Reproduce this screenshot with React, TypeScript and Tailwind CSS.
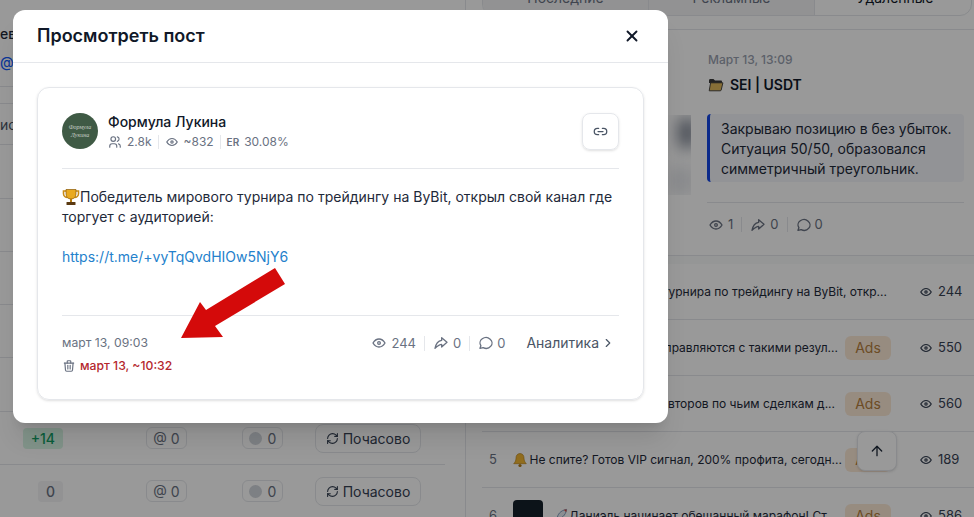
import { ArrowUp, ChevronRight, Link2, RefreshCw, X } from 'lucide-react';
import { TbEye, TbMessageCircle, TbShare3, TbTrash, TbUsers } from 'react-icons/tb';

const font = 'font-["Inter","Liberation_Sans",sans-serif]';

function Trophy() {
  return (
    <svg viewBox="0 0 18 18" className="inline-block h-[18px] w-[18px] align-[-4px]">
      <path d="M4 3H1.5v2.5C1.5 8 3.5 9.5 5.5 9.5M14 3h2.5v2.5c0 2.500-2 4-4 4" fill="none" stroke="#c98a12" strokeWidth="1.6" />
      <path d="M4 1.500h10V6c0 3-2 5-5 5S4 9 4 6z" fill="#e9a91e" stroke="#8a5a08" strokeWidth=".7" />
      <rect x="8" y="11" width="2" height="3" fill="#b67c10" />
      <rect x="4.500" y="14" width="9" height="3" rx=".5" fill="#5b3a12" />
    </svg>
  );
}

function Folder() {
  return (
    <svg viewBox="0 0 16 14" className="h-[14px] w-4 shrink-0">
      <path d="M1 2.500C1 1.700 1.500 1 2.300 1h3.200l1.500 1.600h6c.8 0 1 .6 1 1.400v1H1z" fill="#3a3a3a" />
      <path d="M2.600 4.800h12.300l-1.700 7.200c-.1.500-.5.8-1 .8H1.200z" fill="#e2b95c" stroke="#3a3a3a" strokeWidth=".9" />
    </svg>
  );
}

function Bell() {
  return (
    <svg viewBox="0 0 16 16" className="h-4 w-4 shrink-0">
      <path d="M8 1.500c-2.800 0-4 2.200-4 4.700 0 2.800-1.300 4.300-2.300 5.500h12.600c-1-1.200-2.300-2.700-2.300-5.500 0-2.500-1.200-4.700-4-4.700z" fill="#f2b632" stroke="#b07a14" strokeWidth=".6" />
      <circle cx="8" cy="13.500" r="1.600" fill="#b07a14" />
    </svg>
  );
}

function Rocket() {
  return (
    <svg viewBox="0 0 16 16" className="h-[15px] w-[15px] shrink-0">
      <path d="M4.500 11.500C4.500 7 8 2.500 14.500 1.500 13.500 8 9 11.500 4.500 11.500z" fill="#e8edf3" stroke="#5c7da8" strokeWidth=".8" />
      <path d="M11.500 1.900l2.600 2.600.4-3z" fill="#e0483e" />
      <path d="M4.500 11.500l-3 3 1-3.500zM5 12l-1 3 3-1.500z" fill="#f0a030" />
    </svg>
  );
}

function Divider() {
  return <span className="h-[15px] w-px bg-gray-200" />;
}

function Metrics({ views }: { views: string }) {
  return (
    <div className="flex items-center gap-2 text-[13px] text-gray-500">
      <span className="flex items-center gap-1">
        <TbEye className="h-4 w-4" />
        {views}
      </span>
      <Divider />
      <span className="flex items-center gap-1">
        <TbShare3 className="h-4 w-4" />0
      </span>
      <Divider />
      <span className="flex items-center gap-[3px]">
        <TbMessageCircle className="h-4 w-4" />0
      </span>
    </div>
  );
}

function StatRow({ delta, green }: { delta: string; green?: boolean }) {
  return (
    <div className="flex h-[53px] w-[445px] items-center border-b border-gray-200 text-[14px]">
      <div className="flex w-[63px] justify-end">
        <span className={`flex h-[21px] items-center rounded px-2 font-medium ${green ? 'bg-[#d8f5e4] text-[#0f9d63]' : 'bg-gray-100 text-gray-500'}`}>
          {delta}
        </span>
      </div>
      <span className="ml-[83px] flex h-[22px] w-[41px] items-center justify-center gap-1 rounded-md border border-gray-200 text-gray-500">
        @ 0
      </span>
      <span className="ml-[55px] flex h-[22px] w-[41px] items-center justify-center gap-1.5 rounded-md border border-gray-200 text-gray-500">
        <span className="h-[13px] w-[13px] rounded-full bg-gray-300" />0
      </span>
      <span className="ml-8 flex h-[29px] w-[106px] items-center justify-center gap-1 rounded-lg border border-gray-200 text-gray-700">
        <RefreshCw className="h-[13px] w-[13px]" />
        Почасово
      </span>
    </div>
  );
}

const posts = [
  { n: 1, text: 'Победитель мирового турнира по трейдингу на ByBit, откр...', views: '244', end: 'mr-[4px]' },
  { n: 2, text: 'Не все справляются с такими резул...', views: '550', ads: true, end: 'mr-[4px]' },
  { n: 3, text: 'Список авторов по чьим сделкам д...', views: '560', ads: true, end: 'mr-[7px]' },
];

function PostRow({ n, text, views, ads, end, children }: { n: number; text?: string; views: string; ads?: boolean; end?: string; children?: React.ReactNode }) {
  return (
    <div className="flex h-[56px] shrink-0 items-center border-b border-gray-200 pr-[14px] text-[12px] text-gray-800">
      <span className="w-[31px] shrink-0 pl-[7px] text-[13px] text-gray-500">{n}</span>
      <div className="flex min-w-0 flex-1 justify-end overflow-hidden whitespace-nowrap">
        {children}
        {text && <span className={end}>{text}</span>}
      </div>
      {ads && (
        <span className="ml-[3px] flex h-6 w-[46px] shrink-0 items-center justify-center rounded-md bg-[#fce9d6] text-[14px] text-[#b57f3e]">Ads</span>
      )}
      <span className="flex w-[69px] shrink-0 items-center gap-[5px] pl-7 text-[13px] text-gray-700">
        <TbEye className="h-[14px] w-[14px] shrink-0" />
        {views}
      </span>
    </div>
  );
}

export default function App() {
  return (
    <div className={`relative h-[517px] w-[974px] overflow-hidden bg-white ${font}`}>
      {/* page behind the dialog */}
      <div className="flex h-full">
        <div className="w-[466px] shrink-0 border-r border-gray-200">
          <div className="flex h-[87px] flex-col gap-[9px] border-b border-gray-200 pt-[23px] text-[14px] font-medium text-gray-800">
            <span>ев</span>
            <span className="text-blue-600">@ 9</span>
          </div>
          <div className="h-[17px] border-b border-gray-200" />
          <div className="flex h-[41px] items-center border-b border-gray-200 text-[14px] text-gray-600">исч</div>
          <div className="h-[54px] border-b border-gray-200" />
          <div className="h-[53px] border-b border-gray-200" />
          <div className="h-[53px] border-b border-gray-200" />
          <div className="h-[53px] border-b border-gray-200" />
          <div className="h-[54px] border-b border-gray-200" />
          <StatRow delta="+14" green />
          <StatRow delta="0" />
        </div>
        <div className="flex min-w-0 flex-1 flex-col">
          <div className="h-[30px] shrink-0 border-b border-gray-200">
            <div className="mt-[-21px] ml-4 mr-[2px] flex h-[37px] overflow-hidden rounded-b-xl border border-gray-200 text-[14px] text-gray-500">
              <span className="flex w-[165px] items-center justify-center bg-gray-100">Последние</span>
              <span className="flex w-[167px] items-center justify-center border-x border-gray-200 bg-gray-100">Рекламные</span>
              <span className="flex flex-1 items-center justify-center pl-1 text-gray-900">Удаленные</span>
            </div>
          </div>
          <div className="flex h-[226px] shrink-0 border-b border-gray-200">
            <div className="w-[241px] shrink-0 pt-[85px] pr-4">
              <div className="h-20 overflow-hidden">
                <div className="mt-1 ml-auto h-7 w-4 translate-x-1 bg-gray-500 blur-sm" />
                <div className="mt-5 ml-auto h-7 w-7 translate-x-1 bg-gray-200 blur-sm" />
              </div>
            </div>
            <div className="w-[257px] pt-[21px]">
              <div className="pl-px text-[12px] font-medium text-gray-400">Март 13, 13:09</div>
              <div className="mt-[5px] flex items-center gap-[6px] pl-px text-[14px] font-semibold text-gray-900">
                <Folder />
                SEI | USDT
              </div>
              <div className="mt-[19px] rounded border-l-[3px] border-blue-700 bg-[#f3f5fa] pt-[5px] pb-[3px] pl-[11px] text-[14px] leading-[20px] text-gray-800">
                Закрываю позицию в без убыток. Ситуация 50/50, образовался симметричный треугольник.
              </div>
              <div className="mt-5 border-t border-gray-200 pt-3 pl-px">
                <Metrics views="1" />
              </div>
            </div>
          </div>
          <div className="h-2 shrink-0 bg-gray-50" />
          <div className="ml-4 flex flex-col">
            {posts.map(p => (
              <PostRow key={p.n} {...p} />
            ))}
            <PostRow n={5} views="189" ads>
              <div className="mr-auto flex items-center gap-[2px]">
                <Bell />
                Не спите? Готов VIP сигнал, 200% профита, сегодн...
              </div>
            </PostRow>
            <PostRow n={6} views="586" ads>
              <div className="mr-auto flex items-center gap-[1px]">
                <span className="mr-[9px] h-8 w-[30px] shrink-0 rounded bg-[#15202b]" />
                <Rocket />
                Даниэль начинает обещанный марафон! Ст...
              </div>
            </PostRow>
          </div>
        </div>
      </div>

      <button className="absolute top-[431px] left-[857px] flex h-10 w-10 items-center justify-center rounded-lg border border-gray-200 bg-white shadow-sm">
        <ArrowUp className="h-4 w-4 text-gray-800" />
      </button>

      {/* dialog */}
      <div className="absolute inset-0 bg-black/40 pt-[10px] pl-[13px]">
        <div className="h-[413px] w-[655px] rounded-xl bg-white shadow-xl">
          <div className="flex h-[53px] items-center justify-between border-b border-gray-200 pr-[27px] pl-6">
            <h2 className="-mt-px text-[18px] font-semibold text-gray-900">Просмотреть пост</h2>
            <X className="h-[18px] w-[18px] text-gray-900" strokeWidth={2.500} />
          </div>
          <div className="p-6">
            <div className="h-[313px] rounded-xl border border-gray-200 px-6 pt-[25px] shadow-sm">
              <div className="flex h-[56px] items-start border-b border-gray-200">
                <div className="flex h-9 w-9 shrink-0 flex-col items-center justify-center rounded-full bg-[#3f5a45] font-['Liberation_Serif',serif] text-[6px] leading-[8px] text-white/70 italic">
                  <span>Формула</span>
                  <span>Лукина</span>
                </div>
                <div className="ml-[10px] min-w-0 flex-1">
                  <div className="text-[14px] leading-[18px] font-medium text-gray-900">Формула Лукина</div>
                  <div className="mt-[2px] flex items-center gap-[6px] text-[12px] leading-[18px] text-gray-500">
                    <span className="flex items-center gap-[5px]">
                      <TbUsers className="h-[14px] w-[14px]" />
                      2.8k
                    </span>
                    <span className="h-[14px] w-px bg-gray-200" />
                    <span className="flex items-center gap-[5px]">
                      <TbEye className="h-[14px] w-[14px]" />
                      ~832
                    </span>
                    <span className="h-[14px] w-px bg-gray-200" />
                    <span className="flex items-center gap-[5px]">
                      <span className="text-[10px] font-semibold">ER</span>
                      30.08%
                    </span>
                  </div>
                </div>
                <span className="flex h-[37px] w-[37px] items-center justify-center rounded-lg border border-gray-200 shadow-sm">
                  <Link2 className="h-[15px] w-[15px] text-gray-600" />
                </span>
              </div>
              <div className="h-[147px] border-b border-gray-200 pt-[18px] text-[14px] leading-[20px] text-gray-800">
                <p>
                  <Trophy />
                  Победитель мирового турнира по трейдингу на ByBit, открыл свой канал где торгует с аудиторией:
                </p>
                <p className="mt-5 text-[#2481cc]">https://t.me/+vyTqQvdHIOw5NjY6</p>
              </div>
              <div className="flex items-start justify-between pt-[18px]">
                <div className="text-[12.200px] leading-[18px]">
                  <div className="text-gray-500">март 13, 09:03</div>
                  <div className="mt-[5px] flex items-center gap-[4px] font-medium text-[#b4272d]">
                    <TbTrash className="h-[14px] w-[14px] text-gray-500" />
                    март 13, ~10:32
                  </div>
                </div>
                <div className="flex items-center gap-[21px] pr-1 text-[14px] leading-[18px]">
                  <Metrics views="244" />
                  <span className="flex items-center gap-[2px] text-gray-600">
                    Аналитика
                    <ChevronRight className="h-[14px] w-[14px]" />
                  </span>
                </div>
              </div>
            </div>
          </div>
        </div>
      </div>

      {/* annotation arrow drawn on top of the screenshot */}
      <svg className="absolute top-[262px] left-[175px] h-[82px] w-[115px]" viewBox="175 262 115 82">
        <polygon points="275,268 285,284 215,326 223,337 181,338 200,302 206,310" fill="#d40a0a" />
      </svg>
    </div>
  );
}
